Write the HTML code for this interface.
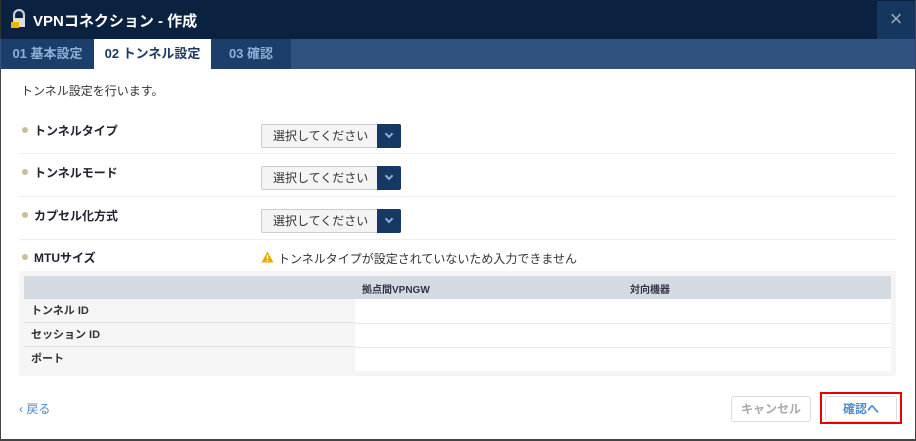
<!DOCTYPE html>
<html><head><meta charset="utf-8"><style>
*{margin:0;padding:0;box-sizing:border-box}
body{width:916px;height:441px;overflow:hidden;background:#fff;font-family:"Liberation Sans","Noto Sans CJK JP",sans-serif;position:relative;font-size:12px;color:#333}
.abs{position:absolute}
.hdr{left:0;top:0;width:916px;height:39px;background:#0b2140;border-left:1px solid #333}
.title{left:33px;top:10px;color:#fff;font-size:15px;font-weight:bold}
.close{left:877px;top:1px;width:38px;height:38px;background:#15375f;color:#9aa7b8;font-size:22px;text-align:center;line-height:36px}
.tabs{left:0;top:39px;width:916px;height:30px;background:#30527f}
.tab{top:39px;height:30px;line-height:30px;font-size:13px;font-weight:bold;text-align:center;color:#8fb0d6;background:#1b3f6a}
.lbl{left:22px;font-size:12px;font-weight:bold;color:#223;}
.lbl:before{content:"";display:inline-block;width:6px;height:6px;border-radius:50%;background:#c8bf98;margin-right:6px;vertical-align:middle;position:relative;top:-2px}
.sep{left:19px;width:877px;height:1px;background:#eceef0}
.sel{left:261px;width:140px;height:24px;border:1px solid #ccc;border-radius:2px;background:#f4f4f4;font-size:12px;color:#333;line-height:22px;padding-left:11px}
.sel b{position:absolute;right:-1px;top:-1px;width:24px;height:24px;background:#173862;border-radius:0 2px 2px 0}
.sel b:after{content:"";position:absolute;left:9px;top:7px;width:4px;height:4px;border-right:2px solid #8fb0d6;border-bottom:2px solid #8fb0d6;transform:rotate(45deg)}
.tr{left:24px;width:867px;height:24px;font-size:11px;font-weight:bold;line-height:24px;padding-left:7px;color:#333;border-bottom:1px solid #e2e2e2}
</style></head><body>
<div class="abs hdr"></div>
<svg class="abs" style="left:9px;top:9px" width="20" height="20" viewBox="0 0 20 20"><path d="M5 9V6a5 5 0 0 1 10 0v3" fill="none" stroke="#ccc" stroke-width="2.2"/><rect x="4" y="9" width="12" height="9" fill="#ddd"/><rect x="2" y="13" width="8" height="6" fill="#f0b400"/></svg>
<div class="abs title">VPNコネクション - 作成</div>
<div class="abs close">×</div>
<div class="abs tabs"></div>
<div class="abs tab" style="left:1px;width:93px">01 基本設定</div>
<div class="abs tab" style="left:94px;width:117px;background:#fff;color:#1e3a63">02 トンネル設定</div>
<div class="abs tab" style="left:211px;width:80px">03 確認</div>
<div class="abs" style="left:0;top:69px;width:1px;height:372px;background:#444"></div>
<div class="abs" style="left:915px;top:0;width:1px;height:441px;background:#444"></div>
<div class="abs" style="left:0;top:439px;width:916px;height:2px;background:#444"></div>
<div class="abs" style="left:21px;top:82px;font-size:12px;color:#333">トンネル設定を行います。</div>
<div class="abs lbl" style="top:122px">トンネルタイプ</div>
<div class="abs sel" style="top:124px">選択してください<b></b></div>
<div class="abs sep" style="top:153px"></div>
<div class="abs lbl" style="top:164px">トンネルモード</div>
<div class="abs sel" style="top:166px">選択してください<b></b></div>
<div class="abs sep" style="top:196px"></div>
<div class="abs lbl" style="top:207px">カプセル化方式</div>
<div class="abs sel" style="top:209px">選択してください<b></b></div>
<div class="abs sep" style="top:239px"></div>
<div class="abs lbl" style="top:249px">MTUサイズ</div>
<svg class="abs" style="left:261px;top:251px" width="13" height="12" viewBox="0 0 13 12"><path d="M6.5 0.5L12.5 11.5H0.5Z" fill="#f0a800"/><rect x="5.8" y="4" width="1.4" height="4" fill="#fff"/><rect x="5.8" y="9" width="1.4" height="1.4" fill="#fff"/></svg>
<div class="abs" style="left:278px;top:250px;font-size:12px;color:#333">トンネルタイプが設定されていないため入力できません</div>
<div class="abs" style="left:19px;top:271px;width:877px;height:105px;background:#f5f5f5"></div>
<div class="abs" style="left:24px;top:276px;width:867px;height:23px;background:#d3dae2;font-size:10px;font-weight:bold;color:#334"><span class="abs" style="left:338px;top:5px">拠点間VPNGW</span><span class="abs" style="left:606px;top:5px">対向機器</span></div>
<div class="abs" style="left:355px;top:299px;width:536px;height:72px;background:#fff"></div>
<div class="abs tr" style="top:299px;width:331px">トンネル ID</div>
<div class="abs tr" style="top:323px;width:331px">セッション ID</div>
<div class="abs tr" style="top:347px;width:331px;border:0">ポート</div>
<div class="abs" style="left:355px;top:323px;width:536px;height:1px;background:#e8e8e8"></div>
<div class="abs" style="left:355px;top:347px;width:536px;height:1px;background:#e8e8e8"></div>
<div class="abs" style="left:19px;top:400px;font-size:12px;color:#4a8cc8">‹ 戻る</div>
<div class="abs" style="left:731px;top:396px;width:80px;height:26px;border:1px solid #ddd;border-radius:3px;text-align:center;line-height:24px;font-size:12px;font-weight:bold;color:#aaa">キャンセル</div>
<div class="abs" style="left:820px;top:392px;width:82px;height:32px;border:2px solid #e60000"></div>
<div class="abs" style="left:825px;top:396px;width:72px;height:26px;border:1px solid #ddd;border-radius:3px;text-align:center;line-height:24px;font-size:12px;font-weight:bold;color:#4a8cc8">確認へ</div>
</body></html>
